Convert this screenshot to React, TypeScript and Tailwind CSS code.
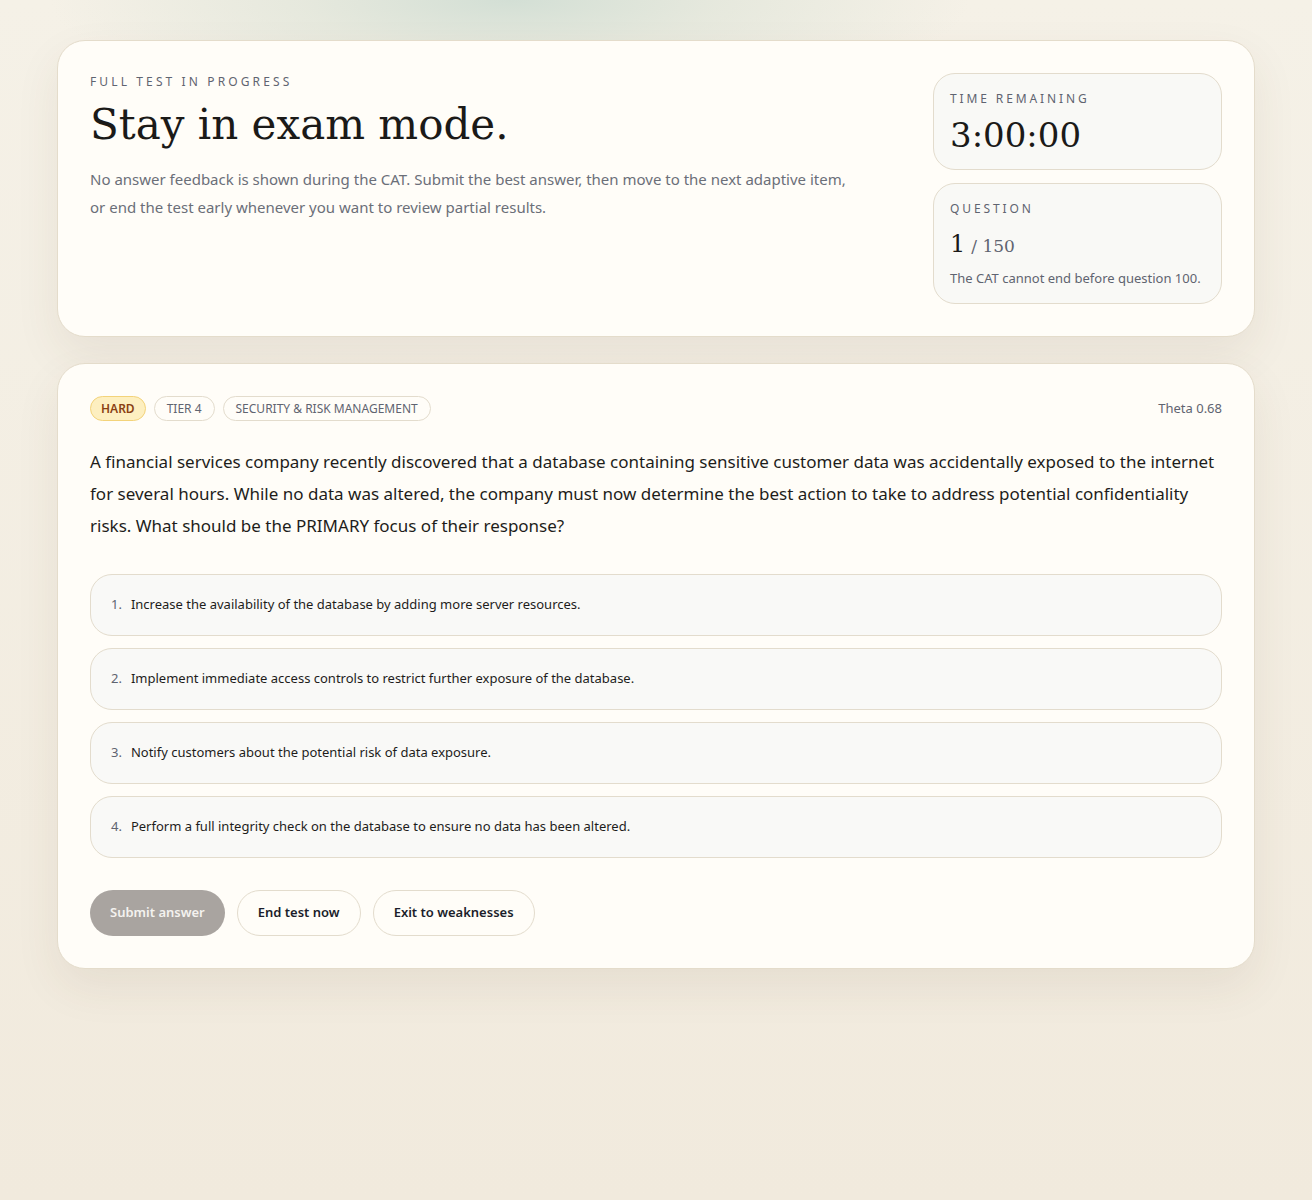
import React from "react";

const serif = "font-['Georgia','DejaVu_Serif',serif]";
const sans = "font-['Noto_Sans','Segoe_UI',sans-serif]";

const options = [
  "Increase the availability of the database by adding more server resources.",
  "Implement immediate access controls to restrict further exposure of the database.",
  "Notify customers about the potential risk of data exposure.",
  "Perform a full integrity check on the database to ensure no data has been altered.",
];

export default function App() {
  return (
    <div
      className={`min-h-[1200px] w-full bg-[radial-gradient(ellipse_460px_110px_at_510px_0px,#d3dfd5_0%,rgba(222,228,216,0.65)_45%,rgba(244,239,228,0)_100%),linear-gradient(180deg,#f5f1e7_0%,#f1eadd_100%)] pt-10 ${sans}`}
    >
      <div className="mx-auto flex w-[1198px] flex-col gap-[26px]">
        {/* status card */}
        <section className="flex justify-between rounded-[28px] border border-[#e4dccb] bg-[#fffdf8] p-8 shadow-[0_18px_45px_rgba(90,70,40,0.08)]">
          <div className="max-w-[770px]">
            <p className="text-[12px] uppercase tracking-[0.26em] text-[#5f6470]">Full test in progress</p>
            <h1 className={`mt-[6px] text-[42px] leading-[56px] text-[#1b1a18] ${serif}`}>Stay in exam mode.</h1>
            <p className="mt-[12px] text-[15px] leading-[28px] text-[#6b6f78]">
              No answer feedback is shown during the CAT. Submit the best answer, then move to the next adaptive item,
              or end the test early whenever you want to review partial results.
            </p>
          </div>
          <div className="flex w-[289px] flex-col gap-[13px]">
            <div className="h-[97px] rounded-[22px] border border-[#e3dccd] bg-[#f9f9f6] px-4 pt-[16px]">
              <p className="text-[12px] uppercase tracking-[0.24em] text-[#5f6470]">Time remaining</p>
              <p className={`mt-[5px] text-[34px] leading-[44px] text-[#1b1a18] ${serif}`}>3:00:00</p>
            </div>
            <div className="h-[121px] rounded-[22px] border border-[#e3dccd] bg-[#f9f9f6] px-4 pt-[16px]">
              <p className="text-[12px] uppercase tracking-[0.24em] text-[#5f6470]">Question</p>
              <p className={`mt-[11px] leading-[30px] text-[#1b1a18] ${serif}`}>
                <span className="text-[24px]">1</span>
                <span className="ml-[6px] text-[17px] text-[#5f6470]">/ 150</span>
              </p>
              <p className="mt-[6px] text-[13px] leading-[20px] text-[#5f6470]">The CAT cannot end before question 100.</p>
            </div>
          </div>
        </section>

        {/* question card */}
        <section className="rounded-[28px] border border-[#e4dccb] bg-[#fffdf8] p-8 shadow-[0_18px_45px_rgba(90,70,40,0.08)]">
          <div className="flex items-center justify-between">
            <div className="flex items-center gap-2">
              <span className="rounded-full border border-[#f3d37a] bg-[#fdefc0] px-[10px] py-[3px] text-[12px] font-semibold leading-[17px] text-[#8a3f12]">
                HARD
              </span>
              <span className="rounded-full border border-[#e3dccd] px-3 py-[3px] text-[12px] leading-[17px] text-[#5f6470]">
                TIER 4
              </span>
              <span className="rounded-full border border-[#e3dccd] px-3 py-[3px] text-[12px] leading-[17px] text-[#5f6470]">
                SECURITY &amp; RISK MANAGEMENT
              </span>
            </div>
            <span className="text-[13px] text-[#5f6470]">Theta 0.68</span>
          </div>

          <p className="mt-[25px] text-[17px] leading-[32px] text-[#1e1d1b]">
            A financial services company recently discovered that a database containing sensitive customer data was
            accidentally exposed to the internet for several hours. While no data was altered, the company must now
            determine the best action to take to address potential confidentiality risks. What should be the PRIMARY
            focus of their response?
          </p>

          <div className="mt-8 flex flex-col gap-3">
            {options.map((o, i) => (
              <button
                key={i}
                className="flex h-[62px] items-center rounded-[22px] border border-[#e3dccd] bg-[#f9f9f7] px-5 text-left text-[13px] text-[#1e1d1b]"
              >
                <span className="mr-[9px] text-[#5f6470]">{i + 1}.</span>
                {o}
              </button>
            ))}
          </div>

          <div className="mt-8 flex gap-3">
            <button className="h-[46px] rounded-full bg-[#a9a4a0] px-5 text-[13px] font-semibold text-[#f4f2ef]">
              Submit answer
            </button>
            <button className="h-[46px] rounded-full border border-[#e3dccd] bg-[#fffdf8] px-5 text-[13px] font-semibold text-[#1b1d2b]">
              End test now
            </button>
            <button className="h-[46px] rounded-full border border-[#e3dccd] bg-[#fffdf8] px-5 text-[13px] font-semibold text-[#1b1d2b]">
              Exit to weaknesses
            </button>
          </div>
        </section>
      </div>
    </div>
  );
}
